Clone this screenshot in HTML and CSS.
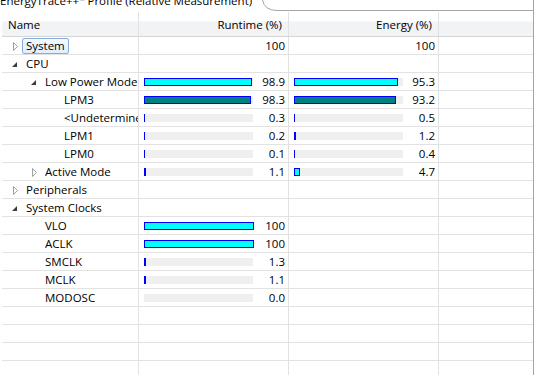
FILE: index.html
```html
<!DOCTYPE html>
<html lang="en">
<head>
  <meta charset="UTF-8" />
  <title>EnergyTrace++ Profile</title>
  <link rel="stylesheet" href="styles.css">
</head>
<body>
  <div class="view">
    <div class="tabs">
      <div class="tab"><span class="tab-title">EnergyTrace++<sup>™</sup> Profile (Relative Measurement)</span></div>
      <svg class="tab-curve" width="18" height="11" viewBox="0 0 18 11"><path d="M0.5 0 Q2.5 10.5 15 10.5 H18" fill="none" stroke="#a5a5a5"/></svg>
      <div class="tab-rest"></div>
    </div>

    <div class="tree">
      <div class="row head">
        <div class="cell">Name</div>
        <div class="cell right">Runtime (%)</div>
        <div class="cell right">Energy (%)</div>
        <div class="cell"></div>
      </div>

      <div class="row">
        <div class="cell name lvl0"><svg class="twistie" width="16" height="17"><path class="closed" d="M7.5 5.5 L11.5 9.5 L7.5 13.5 Z"/></svg><span class="label sel">System</span></div>
        <div class="cell val"><span class="num">100</span></div>
        <div class="cell val"><span class="num">100</span></div>
        <div class="cell"></div>
      </div>
      <div class="row">
        <div class="cell name lvl0"><svg class="twistie" width="16" height="17"><path class="open" d="M11 7 L11 12 L6 12 Z"/></svg><span class="label">CPU</span></div>
        <div class="cell val"></div>
        <div class="cell val"></div>
        <div class="cell"></div>
      </div>
      <div class="row">
        <div class="cell name lvl1"><svg class="twistie" width="16" height="17"><path class="open" d="M11 7 L11 12 L6 12 Z"/></svg><span class="label">Low Power Mode</span></div>
        <div class="cell val"><div class="meter"><div class="fill" style="width:108px"></div></div><span class="num">98.9</span></div>
        <div class="cell val"><div class="meter"><div class="fill" style="width:104px"></div></div><span class="num">95.3</span></div>
        <div class="cell"></div>
      </div>
      <div class="row">
        <div class="cell name lvl2"><span class="twistie"></span><span class="label">LPM3</span></div>
        <div class="cell val"><div class="meter"><div class="fill deep" style="width:107px"></div></div><span class="num">98.3</span></div>
        <div class="cell val"><div class="meter"><div class="fill deep" style="width:102px"></div></div><span class="num">93.2</span></div>
        <div class="cell"></div>
      </div>
      <div class="row">
        <div class="cell name lvl2"><span class="twistie"></span><span class="label">&lt;Undetermined&gt;</span></div>
        <div class="cell val"><div class="meter"><div class="fill" style="width:1px"></div></div><span class="num">0.3</span></div>
        <div class="cell val"><div class="meter"><div class="fill" style="width:1px"></div></div><span class="num">0.5</span></div>
        <div class="cell"></div>
      </div>
      <div class="row">
        <div class="cell name lvl2"><span class="twistie"></span><span class="label">LPM1</span></div>
        <div class="cell val"><div class="meter"><div class="fill" style="width:1px"></div></div><span class="num">0.2</span></div>
        <div class="cell val"><div class="meter"><div class="fill" style="width:2px"></div></div><span class="num">1.2</span></div>
        <div class="cell"></div>
      </div>
      <div class="row">
        <div class="cell name lvl2"><span class="twistie"></span><span class="label">LPM0</span></div>
        <div class="cell val"><div class="meter"><div class="fill" style="width:1px"></div></div><span class="num">0.1</span></div>
        <div class="cell val"><div class="meter"><div class="fill" style="width:1px"></div></div><span class="num">0.4</span></div>
        <div class="cell"></div>
      </div>
      <div class="row">
        <div class="cell name lvl1"><svg class="twistie" width="16" height="17"><path class="closed" d="M7.5 5.5 L11.5 9.5 L7.5 13.5 Z"/></svg><span class="label">Active Mode</span></div>
        <div class="cell val"><div class="meter"><div class="fill" style="width:2px"></div></div><span class="num">1.1</span></div>
        <div class="cell val"><div class="meter"><div class="fill" style="width:6px"></div></div><span class="num">4.7</span></div>
        <div class="cell"></div>
      </div>
      <div class="row">
        <div class="cell name lvl0"><svg class="twistie" width="16" height="17"><path class="closed" d="M7.5 5.5 L11.5 9.5 L7.5 13.5 Z"/></svg><span class="label">Peripherals</span></div>
        <div class="cell val"></div>
        <div class="cell val"></div>
        <div class="cell"></div>
      </div>
      <div class="row">
        <div class="cell name lvl0"><svg class="twistie" width="16" height="17"><path class="open" d="M11 7 L11 12 L6 12 Z"/></svg><span class="label">System Clocks</span></div>
        <div class="cell val"></div>
        <div class="cell val"></div>
        <div class="cell"></div>
      </div>
      <div class="row">
        <div class="cell name lvl1"><span class="twistie"></span><span class="label">VLO</span></div>
        <div class="cell val"><div class="meter"><div class="fill" style="width:110px"></div></div><span class="num">100</span></div>
        <div class="cell val"></div>
        <div class="cell"></div>
      </div>
      <div class="row">
        <div class="cell name lvl1"><span class="twistie"></span><span class="label">ACLK</span></div>
        <div class="cell val"><div class="meter"><div class="fill" style="width:110px"></div></div><span class="num">100</span></div>
        <div class="cell val"></div>
        <div class="cell"></div>
      </div>
      <div class="row">
        <div class="cell name lvl1"><span class="twistie"></span><span class="label">SMCLK</span></div>
        <div class="cell val"><div class="meter"><div class="fill" style="width:2px"></div></div><span class="num">1.3</span></div>
        <div class="cell val"></div>
        <div class="cell"></div>
      </div>
      <div class="row">
        <div class="cell name lvl1"><span class="twistie"></span><span class="label">MCLK</span></div>
        <div class="cell val"><div class="meter"><div class="fill" style="width:2px"></div></div><span class="num">1.1</span></div>
        <div class="cell val"></div>
        <div class="cell"></div>
      </div>
      <div class="row">
        <div class="cell name lvl1"><span class="twistie"></span><span class="label">MODOSC</span></div>
        <div class="cell val"><div class="meter"></div><span class="num">0.0</span></div>
        <div class="cell val"></div>
        <div class="cell"></div>
      </div>

      <!-- empty filler rows -->
      <div class="row"><div class="cell"></div><div class="cell"></div><div class="cell"></div><div class="cell"></div></div>
      <div class="row"><div class="cell"></div><div class="cell"></div><div class="cell"></div><div class="cell"></div></div>
      <div class="row"><div class="cell"></div><div class="cell"></div><div class="cell"></div><div class="cell"></div></div>
      <div class="row"><div class="cell"></div><div class="cell"></div><div class="cell"></div><div class="cell"></div></div>
    </div>
  </div>
</body>
</html>
```

FILE: styles.css
```css
* {
  box-sizing: border-box;
}
body {
  margin: 0;
  background: #fff;
  font-family: 'Open Sans', sans-serif;
  font-size: 11.5px;
  color: #000;
}
.view {
  width: 534px;
  height: 375px;
  border-right: 1px solid #a5a5a5;
  overflow: hidden;
}
.tabs {
  display: flex;
  height: 11px;
}
.tab {
  width: 262px;
  height: 11px;
  overflow: hidden;
  white-space: nowrap;
}
.tab-title {
  display: block;
  margin-top: -8px;
  line-height: 17px;
}
.tab-title sup {
  font-size: 7px;
  vertical-align: 2px;
}
.tab-curve {
  display: block;
  flex: none;
}
.tab-rest {
  flex: 1;
  height: 11px;
  border-bottom: 1px solid #a5a5a5;
}
.tree {
  margin-top: 1px;
  padding-left: 2px;
}
.row {
  display: grid;
  grid-template-columns: 137px 150px 150px 1fr;
  height: 18px;
  border-bottom: 1px solid #e2e2e2;
}
.head {
  height: 25px;
  background: linear-gradient(#fff 0, #fff 9px, #f2f3f5 10px, #f2f3f5 100%);
  border-bottom-color: #d5d5d5;
}
.cell {
  display: flex;
  align-items: center;
  overflow: hidden;
  white-space: nowrap;
  border-right: 1px solid #e2e2e2;
}
.cell:last-child {
  border-right: 0;
}
.head .cell {
  padding: 0 6px;
}
.head .right {
  justify-content: flex-end;
}
.name {
  padding-left: 4px;
}
.name.lvl1 {
  padding-left: 23px;
}
.name.lvl2 {
  padding-left: 42px;
}
.twistie {
  display: block;
  flex: none;
  width: 16px;
  height: 17px;
}
.twistie .closed {
  fill: #fff;
  stroke: #a0a0a0;
}
.twistie .open {
  fill: #3c3c3c;
}
.label {
  padding: 0 3px;
  border: 1px solid transparent;
  border-radius: 2px;
  line-height: 14px;
}
.label.sel {
  border-color: #86acde;
  background: linear-gradient(#f4f9fe, #e3eefc);
}
.val {
  padding: 0 3px 0 5px;
}
.meter {
  flex: none;
  width: 109px;
  height: 8px;
  background: #efefef;
}
.fill {
  height: 8px;
  background: #00ffff;
  box-shadow: inset 0 0 0 1px #0000ff;
}
.fill.deep {
  background: #008080;
}
.num {
  flex: 1;
  text-align: right;
}
```
